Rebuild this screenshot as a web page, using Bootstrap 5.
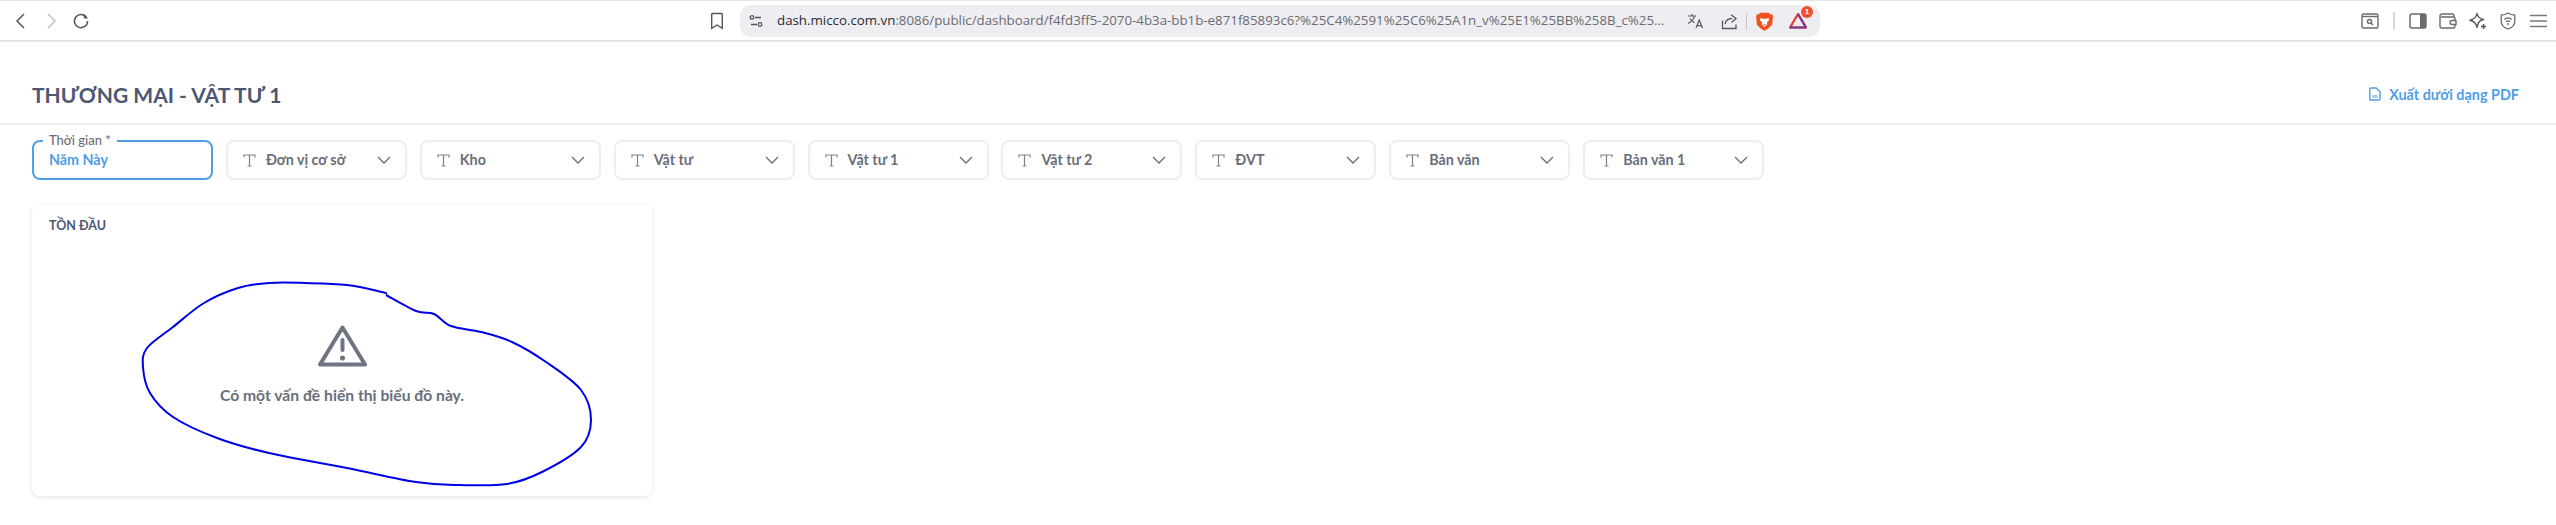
<!DOCTYPE html>
<html lang="vi">
<head>
    <meta charset="UTF-8">
    <title>THƯƠNG MẠI - VẬT TƯ 1</title>
    <link href="https://cdn.jsdelivr.net/npm/bootstrap@5.3.0/dist/css/bootstrap.min.css" rel="stylesheet">
    <style>
        html, body { background: #fff; }
        body { font-family: Lato, "Noto Sans", sans-serif; color: #4c5773; height: 525px; overflow: hidden; }
        .chrome-bar { height: 42px; border-top: 1px solid #e6e6e6; border-bottom: 2px solid #e6e6e6; padding: 0 3px 0 6px; }
        .tb-btn { width: 30px; height: 30px; flex: none; }
        .tb-btn svg { display: block; }
        .bookmark-btn { margin-left: 606px; }
        .url-box { width: 1080px; height: 32px; margin-left: 8px; margin-top: 1px; background: #eeeef2; border-radius: 11px; padding-left: 1px; }
        .url-text { width: 891px; margin-left: 6px; font-family: "Open Sans", sans-serif; font-size: 13.3px; color: #6b6b70; white-space: nowrap; }
        .url-text b { font-weight: 400; color: #2b2b30; }
        .tb-sep { width: 2px; height: 18px; background: #d8d8dc; flex: none; }
        .ext-sep { width: 1px; height: 17px; background: #c4c4c8; flex: none; margin: 0 2px; }
        .url-tools { margin-left: 12px; }
        .bat-wrap { position: relative; }
        .bat-count { position: absolute; top: 0; right: 0; width: 12px; height: 12px; border-radius: 50%; background: #f0512c; color: #fff; font: 700 8px/12px "Liberation Sans", sans-serif; text-align: center; }
        .page-head { height: 83px; padding: 24px 37px 0 32px; border-bottom: 2px solid #f0f0f0; }
        .page-title { font-size: 21px; font-weight: 700; color: #4c5773; margin: 0; }
        .pdf-link { color: #509ee3; font-size: 14.4px; font-weight: 700; text-decoration: none; }
        .filter-row { padding: 15px 32px 0; gap: 12.9px; }
        .filter-box { position: relative; width: 181px; height: 40px; border: 2px solid #eeeeee; border-radius: 8px; padding: 0 14px 0 15px; font-size: 14.3px; font-weight: 700; color: #696e7b; }
        .filter-box.is-set { border-color: #509ee3; color: #509ee3; }
        .filter-name { margin-left: 10px; }
        .filter-legend { position: absolute; top: -10px; left: 9px; padding: 0 6px; background: #fff; font-size: 13px; font-weight: 500; line-height: 16px; color: #696e7b; }
        .t-glyph { flex: none; }
        .report-card { width: 620px; height: 291px; margin: 25px 0 0 32px; border: 0; border-radius: 8px; box-shadow: 0 1px 5px rgba(0, 0, 0, .12); }
        .report-title { padding: 13px 17px 0; height: 32px; font-size: 12.5px; font-weight: 700; line-height: 16px; color: #4c5773; }
        .report-msg { font-size: 15.7px; font-weight: 700; color: #696e7b; margin-top: 17px; }
        .scribble { position: absolute; top: 0; left: 0; pointer-events: none; }
    </style>
</head>
<body class="position-relative">
    <!-- thanh trình duyệt -->
    <div class="chrome-bar d-flex align-items-center">
        <div class="tb-btn d-flex align-items-center justify-content-center">
            <svg width="16" height="18" viewBox="0 0 16 18" fill="none" stroke="#55555a" stroke-width="1.5"><path d="M11 2 4 9l7 7"/></svg>
        </div>
        <div class="tb-btn d-flex align-items-center justify-content-center">
            <svg width="16" height="18" viewBox="0 0 16 18" fill="none" stroke="#c2c2c6" stroke-width="1.5"><path d="m5 2 7 7-7 7"/></svg>
        </div>
        <div class="tb-btn d-flex align-items-center justify-content-center">
            <svg width="18" height="18" viewBox="0 0 18 18" fill="none" stroke="#55555a" stroke-width="1.5"><path d="M14.6 5.6A6.6 6.6 0 1 0 15.6 9"/><path d="M11.8 1.8v4.6h4.2z" fill="#55555a" stroke="none"/></svg>
        </div>
        <div class="tb-btn bookmark-btn d-flex align-items-center justify-content-center">
            <svg width="14" height="18" viewBox="0 0 14 18" fill="none" stroke="#55555a" stroke-width="1.4"><path d="M2.5 1.5h9a.8.8 0 0 1 .8.8v14L7 13l-5.3 3.3v-14a.8.8 0 0 1 .8-.8z"/></svg>
        </div>
        <div class="url-box d-flex align-items-center">
            <div class="tb-btn d-flex align-items-center justify-content-center">
                <svg width="16" height="16" viewBox="0 0 16 16" fill="none" stroke="#55555a" stroke-width="1.3"><circle cx="4" cy="4.5" r="1.8"/><path d="M7 4.5h6M3 11.5h6"/><circle cx="12" cy="11.5" r="1.8"/></svg>
            </div>
            <div class="url-text"><b>dash.micco.com.vn</b>:8086/public/dashboard/f4fd3ff5-2070-4b3a-bb1b-e871f85893c6?%25C4%2591%25C6%25A1n_v%25E1%25BB%258B_c%25...</div>
            <div class="url-tools d-flex align-items-center">
                <div class="tb-btn d-flex align-items-center justify-content-center">
                    <svg width="17" height="16" viewBox="0 0 17 16" fill="none" stroke="#55555a" stroke-width="1.2"><path d="M1 3h8M5 1v2M7.5 3C7 6 4 9 1 10.5M3 5.5c1 2 3 3.5 4.5 4.3M9 15l3.2-8 3.3 8M10 12.6h4.6"/></svg>
                </div>
                <div class="tb-btn ms-1 d-flex align-items-center justify-content-center">
                    <svg width="17" height="17" viewBox="0 0 17 17" fill="none" stroke="#55555a" stroke-width="1.3"><path d="M1.5 7.5v8h13.5v-4M4 11c.8-3.5 3.500-5.500 7-5.500"/><path d="M10 1.800 15 5.500 10.500 9.500"/></svg>
                </div>
                <div class="ext-sep"></div>
                <div class="tb-btn d-flex align-items-center justify-content-center">
                    <svg width="17" height="19" viewBox="0 0 17 19"><path d="M4 .8h9l1.300 1.700 1.900-.4.800 2.500-.8 8.200-4.200 4L8.500 18.800 4.900 16.800.9 12.800.1 4.600l.9-2.500 1.700.4z" fill="#f1511f"/><path d="M4.500 6 7 6.800h3l2.500-.8.700 2-2.400 2.500.5 1.800L8.500 15 5.700 12.300l.5-1.800L3.800 8z" fill="#fff"/><path d="M8.500 8.500v4M7 12.300h3L8.500 13.800z" fill="#f1511f"/></svg>
                </div>
                <div class="tb-btn bat-wrap ms-1 d-flex align-items-center justify-content-center">
                    <svg width="18" height="16" viewBox="0 0 18 16"><path d="M9 1 1 14.500h16z" fill="none" stroke="#e23a2e" stroke-width="2.200" stroke-linejoin="round"/><path d="M1 14.500h16" stroke="#7d3d94" stroke-width="2.200"/><path d="m9 1 8 13.500" stroke="#7d3d94" stroke-width="2.200"/></svg>
                    <span class="bat-count">1</span>
                </div>
            </div>
        </div>
        <div class="d-flex align-items-center ms-auto">
            <div class="tb-btn d-flex align-items-center justify-content-center">
                <svg width="18" height="16" viewBox="0 0 18 16" fill="none" stroke="#6b6b70" stroke-width="1.400"><rect x="1" y="1" width="16" height="14" rx="1.500"/><path d="M1 3.500h16"/><circle cx="8.500" cy="8.500" r="2"/><path d="m10 10 2 2"/></svg>
            </div>
            <div class="tb-sep mx-2"></div>
            <div class="tb-btn d-flex align-items-center justify-content-center">
                <svg width="18" height="16" viewBox="0 0 18 16"><rect x="1" y="1" width="16" height="14" rx="2" fill="none" stroke="#6b6b70" stroke-width="1.500"/><path d="M11 1h4a2 2 0 0 1 2 2v10a2 2 0 0 1-2 2h-4z" fill="#6b6b70"/></svg>
            </div>
            <div class="tb-btn d-flex align-items-center justify-content-center">
                <svg width="18" height="16" viewBox="0 0 18 16" fill="none" stroke="#6b6b70" stroke-width="1.400"><path d="M15 4V2.500A1.500 1.500 0 0 0 13.500 1H3a2 2 0 0 0-2 2v10a2 2 0 0 0 2 2h11a2 2 0 0 0 2-2V5.500A1.500 1.500 0 0 0 14.500 4H2"/><path d="M17 7.500h-4a2 2 0 0 0 0 4h4z" fill="#fff"/></svg>
            </div>
            <div class="tb-btn d-flex align-items-center justify-content-center">
                <svg width="18" height="18" viewBox="0 0 18 18" fill="none" stroke="#55555a" stroke-width="1.400" stroke-linejoin="round"><path d="M8 1.500C8.600 5 10 6.500 14.500 7.500 11 8.500 9.500 10 9 12 8.500 13.500 8 14.500 8 15.500 7.400 12 6 9.500 1 8.300 6 7 7.400 5 8 1.500z"/><path d="M14.500 12v5M12 14.500h5" stroke-width="1.500"/></svg>
            </div>
            <div class="tb-btn d-flex align-items-center justify-content-center">
                <svg width="16" height="18" viewBox="0 0 16 18" fill="none" stroke="#6b6b70" stroke-width="1.300"><path d="M8 1c2 1.300 4.300 2 6.800 2.200V9c0 4-3 6.800-6.800 8C4.200 15.800 1.200 13 1.200 9V3.200C3.700 3 6 2.300 8 1z"/><path d="M4.300 7.500c2.200-1.800 5.200-1.800 7.400 0M5.800 9.700c1.300-1 3.100-1 4.400 0"/><circle cx="8" cy="12" r=".9" fill="#6b6b70" stroke="none"/></svg>
            </div>
            <div class="tb-btn d-flex align-items-center justify-content-center">
                <svg width="17" height="14" viewBox="0 0 17 14" fill="none" stroke="#77777c" stroke-width="1.600"><path d="M0 1.500h17M0 7h17M0 12.500h17"/></svg>
            </div>
        </div>
    </div>

    <!-- tiêu đề -->
    <div class="page-head d-flex align-items-center justify-content-between">
        <h1 class="page-title">THƯƠNG MẠI - VẬT TƯ 1</h1>
        <a class="pdf-link d-flex align-items-center gap-2" href="#">
            <svg width="12" height="14" viewBox="0 0 12 14" fill="none" stroke="#509ee3" stroke-width="1.400"><path d="M1.800 1h5.400L11 4.800v7.200a1 1 0 0 1-1 1H1.800a1 1 0 0 1-1-1V2a1 1 0 0 1 1-1z"/><path d="M3 8h6v3H3z" fill="#a9d0f1" stroke="none"/></svg>
            Xuất dưới dạng PDF
        </a>
    </div>

    <!-- bộ lọc -->
    <div class="filter-row d-flex" id="filters">
        <div class="filter-box is-set d-flex align-items-center">
            <span class="filter-legend">Thời gian *</span>
            <span>Năm Này</span>
        </div>
    </div>

    <!-- thẻ biểu đồ -->
    <div class="card report-card">
        <div class="report-title">TỒN ĐẦU</div>
        <div class="flex-grow-1 d-flex flex-column align-items-center justify-content-center">
            <svg width="49" height="42" viewBox="0 0 49 42" fill="none" stroke="#6f7580" stroke-width="4" stroke-linecap="round" stroke-linejoin="round"><path d="M24.500 2.500 47 39.500H2z"/><path d="M24.500 15v10"/><circle cx="24.500" cy="33" r="1.300" fill="#6f7580" stroke-width="2.500"/></svg>
            <div class="report-msg">Có một vấn đề hiển thị biểu đồ này.</div>
        </div>
    </div>

    <!-- nét khoanh tay phía trên -->
    <svg class="scribble" width="2556" height="525" fill="none" stroke="#0000e6" stroke-width="2" stroke-linejoin="round"><path id="scribblePath"/></svg>

    <script>
        const filterNames = ['Đơn vị cơ sở', 'Kho', 'Vật tư', 'Vật tư 1', 'Vật tư 2', 'ĐVT', 'Bản văn', 'Bản văn 1'];
        const filters = document.getElementById('filters');
        filterNames.forEach((name) => {
            const box = document.createElement('div');
            box.className = 'filter-box d-flex align-items-center';
            box.innerHTML = `
                <svg class="t-glyph" width="13" height="13" viewBox="0 0 13 13" fill="none" stroke="#7c818c" stroke-width="1.200"><path d="M1 3.500V1h11v2.500M6.500 1v11M4.500 12h4"/></svg>
                <span class="filter-name flex-grow-1">${name}</span>
                <svg width="14" height="8" viewBox="0 0 14 8" fill="none" stroke="#696e7b" stroke-width="1.300"><path d="m1 1 6 6 6-6"/></svg>
            `;
            filters.appendChild(box);
        });

        // đường khoanh: các điểm đo từ ảnh, nối bằng catmull-rom
        const pts = [[387,294],[382,292],[347,285],[305,283],[269,283],[238,288],[204,303],[173,327],[147,348],[143,367],[150,393],[173,417],[217,438],[269,453],[347,468],[416,482],[460,485],[507,484],[542,472],[581,447],[591,420],[581,390],[546,362],[512,342],[481,332],[451,326],[434,314],[416,311],[386,295]];
        let d = `M${pts[0]}`;
        for (let i = 0; i < pts.length - 1; i++) {
            const p0 = pts[Math.max(i - 1, 0)], p1 = pts[i], p2 = pts[i + 1], p3 = pts[Math.min(i + 2, pts.length - 1)];
            d += `C${p1[0] + (p2[0] - p0[0]) / 6} ${p1[1] + (p2[1] - p0[1]) / 6} ${p2[0] - (p3[0] - p1[0]) / 6} ${p2[1] - (p3[1] - p1[1]) / 6} ${p2[0]} ${p2[1]}`;
        }
        document.getElementById('scribblePath').setAttribute('d', d);
    </script>
    <script src="https://cdn.jsdelivr.net/npm/bootstrap@5.3.0/dist/js/bootstrap.bundle.min.js"></script>
</body>
</html>
